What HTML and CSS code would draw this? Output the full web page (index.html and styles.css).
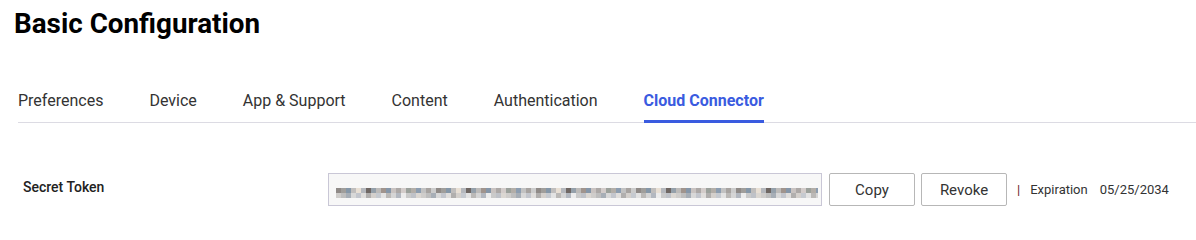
FILE: index.html
```html
<!DOCTYPE html>
<html lang="en">
<head>
<meta charset="utf-8">
<title>Basic Configuration</title>
<link rel="stylesheet" href="styles.css">
</head>
<body>
<main class="page">
  <h1 class="title">Basic Configuration</h1>
  <nav class="tabs">
    <a class="tab">Preferences</a>
    <a class="tab">Device</a>
    <a class="tab">App &amp; Support</a>
    <a class="tab">Content</a>
    <a class="tab">Authentication</a>
    <a class="tab active">Cloud Connector</a>
  </nav>
  <section class="row">
    <div class="label">Secret Token</div>
    <div class="field">
      <div class="token-box"><div class="token"></div></div>
      <button class="btn">Copy</button>
      <button class="btn">Revoke</button>
      <span class="sep">|</span>
      <span class="exp-label">Expiration</span>
      <span class="exp-date">05/25/2034</span>
    </div>
  </section>
</main>
</body>
</html>
```
FILE: styles.css
```css
* { box-sizing: border-box; }
html, body { margin: 0; background: #ffffff; }
body {
  font-family: Roboto, "Liberation Sans", Arial, sans-serif;
  color: #333333;
}
.page {
  display: flex;
  flex-direction: column;
}
.title {
  margin: 0;
  padding: 6px 0 0 14px;
  font-size: 27.8px;
  font-weight: 700;
  line-height: 36px;
  color: #000000;
}
.tabs {
  margin: 49px 0 0 18px;
  display: flex;
  gap: 46px;
  border-bottom: 1px solid #dcdbe3;
}
.tab {
  position: relative;
  font-size: 16px;
  line-height: 20px;
  padding: 0 0 11px 0;
  color: #333333;
  cursor: pointer;
}
.tab.active {
  font-weight: 700;
  color: #3a5be0;
}
.tab.active::after {
  content: "";
  position: absolute;
  left: 0;
  right: 0;
  bottom: -1px;
  height: 3px;
  background: #3a5be0;
}
.row {
  display: flex;
  align-items: center;
  margin-top: 50px;
  padding-left: 23px;
}
.label {
  width: 305px;
  font-size: 14px;
  font-weight: 500;
  color: #222222;
  margin-top: -6px;
}
.field {
  display: flex;
  align-items: center;
}
.token-box {
  width: 494px;
  height: 33px;
  border: 1px solid #c9c7d6;
  background: #f7f7f7;
  padding: 14px 0 0 7px;
}
.token {
  width: 482px;
  height: 10px;
  background-image:
    linear-gradient(to right,
      #8f8a87 0 5px, #a09e9b 5px 10px, #8597a8 10px 15px, #c0bebd 15px 20px, #e8dfd4 20px 25px,
      #b5b8bd 25px 30px, #6f6763 30px 35px, #95a0aa 35px 40px, #bdbbb9 40px 45px, #a0948d 45px 50px,
      #8596a8 50px 55px, #c9c3c1 55px 60px, #aca8a6 60px 65px, #d3ccca 65px 70px, #9ba19b 70px 75px,
      #b3aea8 75px 80px, #8c9db0 80px 85px, #c2c2c2 85px 90px, #a7a3a0 90px 95px, #cccccc 95px 100px),
    linear-gradient(to right,
      #cfcdcb 0 5px, #bebebe 5px 10px, #a7aeb6 10px 15px, #d8d8d8 15px 20px, #c3c6cd 20px 25px,
      #e0dedc 25px 30px, #b1afae 30px 35px, #d4d0cc 35px 40px, #c6cad0 40px 45px, #e3e3e3 45px 50px,
      #bbb9b7 50px 55px, #d5d5d5 55px 60px, #b3b8c0 60px 65px, #ececec 65px 70px, #cacaca 70px 75px,
      #bfc2c8 75px 80px, #dbd7d2 80px 85px);
  background-size: 100px 5px, 85px 5px;
  background-position: 0 0, 0 5px;
  background-repeat: repeat-x, repeat-x;
}
.btn {
  margin-left: 7px;
  width: 86px;
  height: 33px;
  border: 1px solid #b7b7b7;
  border-radius: 2px;
  background: #ffffff;
  font-family: inherit;
  font-size: 15px;
  color: #333333;
  padding: 0;
  cursor: pointer;
}
.btn + .btn { margin-left: 6px; }
.sep {
  margin-left: 10px;
  font-size: 13px;
  color: #6b1e2a;
}
.exp-label {
  margin-left: 10px;
  font-size: 13px;
  color: #333333;
}
.exp-date {
  margin-left: 12px;
  font-size: 13px;
  color: #333333;
}
```
